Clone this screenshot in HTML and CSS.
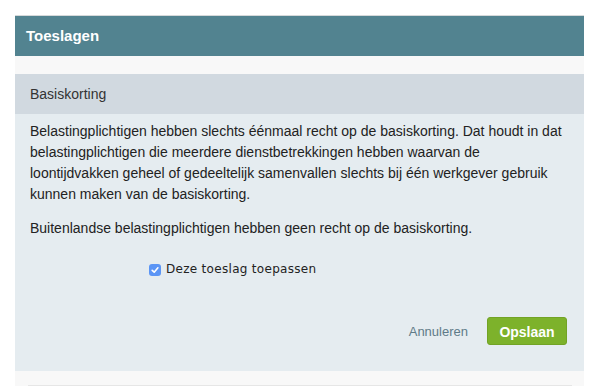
FILE: index.html
```html
<!DOCTYPE html>
<html lang="nl">
<head>
<meta charset="utf-8">
<link rel="stylesheet" href="styles.css">
</head>
<body>
<div class="panel">
  <div class="panel-head">Toeslagen</div>
  <div class="spacer"></div>
  <div class="section-head">Basiskorting</div>
  <div class="section-body">
    <p>Belastingplichtigen hebben slechts éénmaal recht op de basiskorting. Dat houdt in dat belastingplichtigen die meerdere dienstbetrekkingen hebben waarvan de loontijdvakken geheel of gedeeltelijk samenvallen slechts bij één werkgever gebruik kunnen maken van de basiskorting.</p>
    <p>Buitenlandse belastingplichtigen hebben geen recht op de basiskorting.</p>
    <label class="check">
      <span class="box"><svg width="10" height="10" viewBox="0 0 10 10"><path d="M2.2 5.3 L4.2 7.2 L7.9 2.8" fill="none" stroke="#fff" stroke-width="1.6" stroke-linecap="round" stroke-linejoin="round"/></svg></span>
      <span class="check-label">Deze toeslag toepassen</span>
    </label>
    <div class="actions">
      <span class="cancel">Annuleren</span>
      <span class="save">Opslaan</span>
    </div>
  </div>
  <div class="foot"><div class="foot-line"></div></div>
</div>
</body>
</html>
```
FILE: styles.css
```css
html, body {
  margin: 0;
  padding: 0;
  background: #fff;
}
body {
  padding: 15px 0 0 15px;
  font-family: "Liberation Sans", Arial, sans-serif;
  color: #333;
}
.panel {
  width: 569px;
  background: #f8f8f8;
}
.panel-head {
  height: 40px;
  border-top: 1px solid #d6d9da;
  background: #528390;
  color: #fff;
  font-weight: bold;
  font-size: 15px;
  line-height: 40px;
  padding-left: 11px;
}
.spacer {
  height: 18px;
}
.section-head {
  height: 40px;
  line-height: 40px;
  background: #d1d9e0;
  font-size: 14px;
  padding-left: 15px;
  color: #333;
}
.section-body {
  background: #e5ecf0;
  padding: 7px 15px 26px 15px;
  font-size: 14px;
  line-height: 21px;
  color: #222;
}
.section-body p {
  margin: 0 0 13px 0;
}
.check {
  display: flex;
  align-items: center;
  gap: 5px;
  margin: 20px 0 0 119px;
}
.box {
  width: 12px;
  height: 12px;
  border-radius: 3px;
  background: #5b95f5;
  display: flex;
  align-items: center;
  justify-content: center;
}
.check-label {
  font-family: "DejaVu Sans", Verdana, sans-serif;
  font-size: 12px;
  color: #222;
  letter-spacing: 0.3px;
}
.actions {
  display: flex;
  justify-content: flex-end;
  align-items: center;
  gap: 19px;
  margin-top: 37px;
  padding-right: 2px;
}
.cancel {
  font-size: 13px;
  color: #5f7b88;
}
.save {
  display: inline-block;
  width: 80px;
  height: 28px;
  line-height: 28px;
  text-align: center;
  background: #7db22b;
  border: 1px solid #72a325;
  border-radius: 3px;
  color: #fff;
  font-weight: bold;
  font-size: 14px;
  box-sizing: border-box;
}
.foot {
  height: 15px;
  display: flex;
  align-items: flex-end;
  justify-content: center;
}
.foot-line {
  width: 544px;
  height: 1px;
  background: #e6e6e6;
}
```
